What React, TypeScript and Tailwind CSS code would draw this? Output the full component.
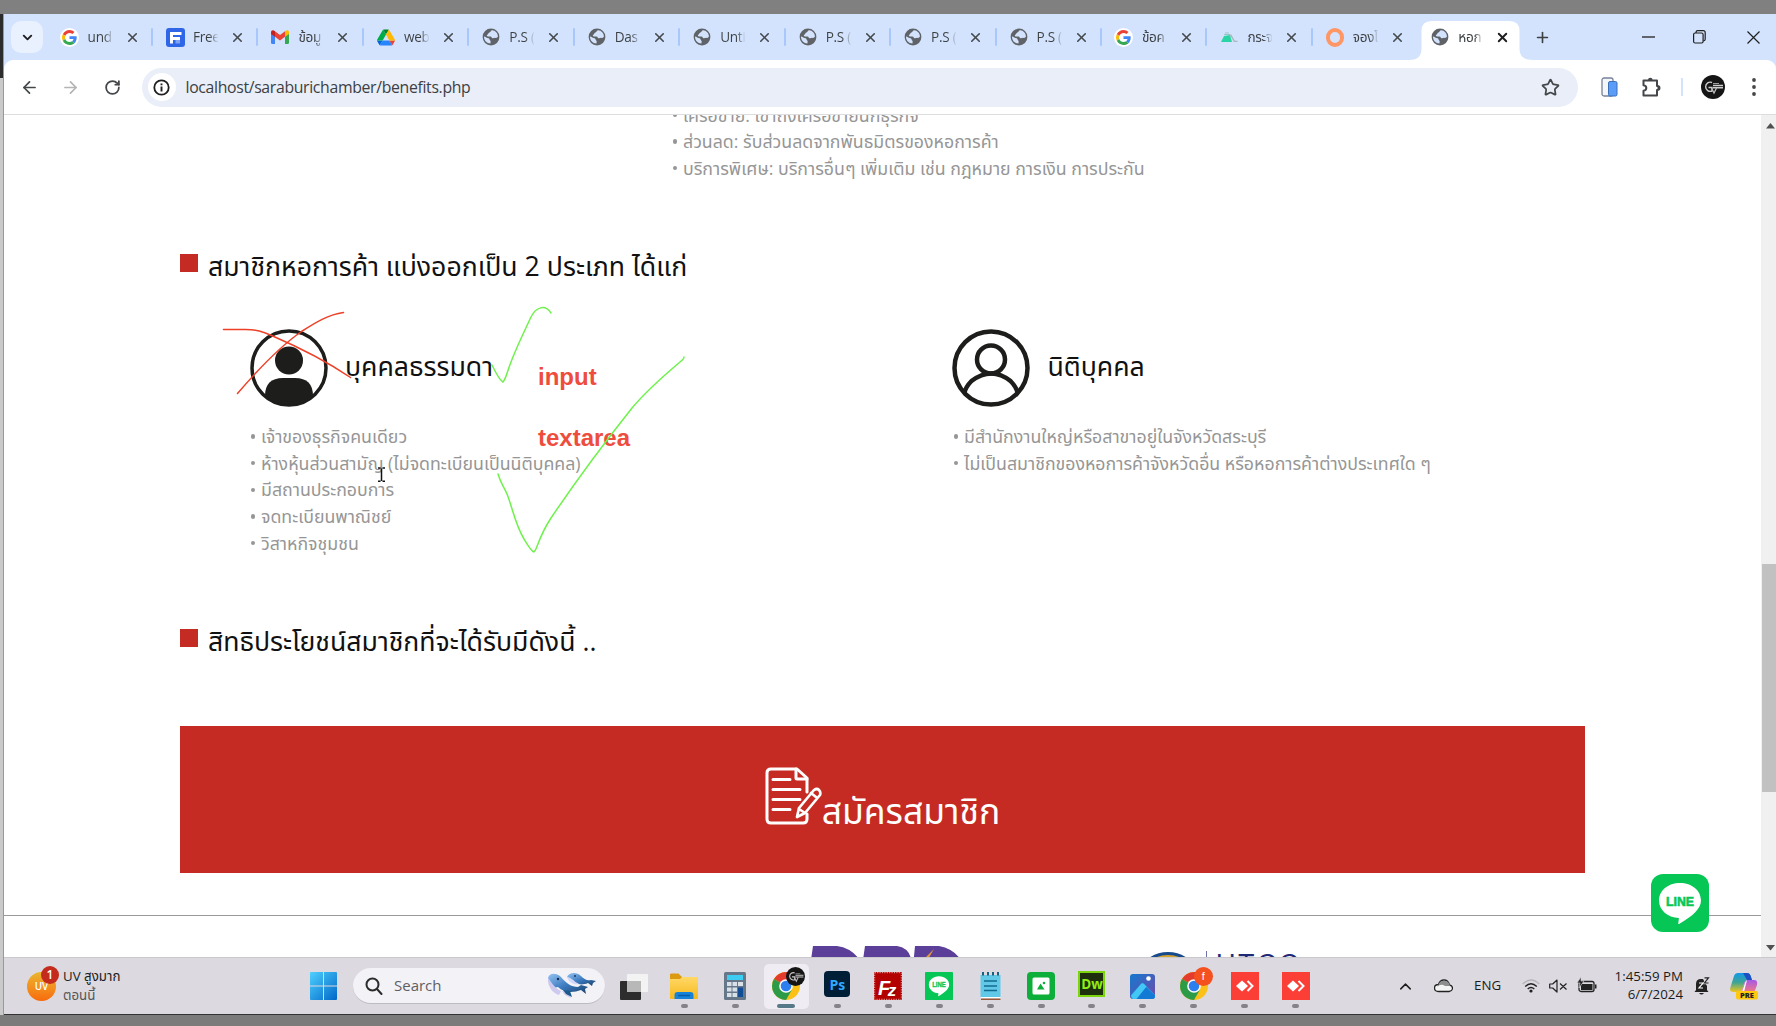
import type { ReactNode } from "react";
import { ArrowLeft, ArrowRight, ChevronDown, ChevronUp, Plus, RotateCw, Star, X } from "lucide-react";

function Google() {
  return (
    <span className="flex h-[19px] w-[19px] items-center justify-center rounded-full bg-white">
      <svg width="15" height="15" viewBox="0 0 48 48">
        <path fill="#EA4335" d="M24 9.5c3.54 0 6.71 1.22 9.21 3.6l6.85-6.85C35.9 2.38 30.47 0 24 0 14.62 0 6.51 5.38 2.56 13.22l7.98 6.19C12.43 13.72 17.74 9.5 24 9.5z" />
        <path fill="#4285F4" d="M46.98 24.55c0-1.57-.15-3.09-.38-4.55H24v9.02h12.94c-.58 2.96-2.26 5.48-4.78 7.18l7.73 6c4.51-4.18 7.09-10.36 7.09-17.65z" />
        <path fill="#FBBC05" d="M10.53 28.59c-.48-1.45-.76-2.99-.76-4.59s.27-3.14.76-4.59l-7.98-6.19C.92 16.46 0 20.12 0 24c0 3.88.92 7.54 2.56 10.78l7.97-6.19z" />
        <path fill="#34A853" d="M24 48c6.48 0 11.93-2.13 15.89-5.81l-7.73-6c-2.15 1.45-4.92 2.3-8.16 2.3-6.26 0-11.57-4.22-13.47-9.91l-7.98 6.19C6.51 42.62 14.62 48 24 48z" />
      </svg>
    </span>
  );
}

function Globe() {
  return (
    <svg width="18" height="18" viewBox="0 0 18 18">
      <circle cx="9" cy="9" r="8.4" fill="#5f6368" />
      <path d="M10.2 2.2c-1.6.1-1.4 1.9-2.8 2.3-1.3.4-.9 1.8-2.1 2.3-.9.4-.4 1.6.8 1.6h2.3c1.3 0 1.1 1.6 2.3 1.8 1 .2 1.600-.5 2.800-.3 1.100.2 1.900-.3 2.500-1.600C15.700 5 13.400 2.400 10.200 2.200z" fill="#d3e3fd" />
      <path d="M2 8.500c1.500.3 3 1.500 4.600 1.800 1.300.3.700 1.700 1.600 2.200.9.500.2 1.700.3 2.900C4.800 15.400 1.900 12.500 2 8.500z" fill="#d3e3fd" />
    </svg>
  );
}

function FreeIcon() {
  return (
    <svg width="19" height="19" viewBox="0 0 19 19">
      <rect width="19" height="19" rx="3" fill="#2f66e8" />
      <path d="M4 15.500V4h11.500v3H7v2h7v3H7v3.500z" fill="#fff" />
      <path d="M9.500 12h4.500v3.500h-4.500z" fill="#7fa2f5" />
    </svg>
  );
}

function Gmail() {
  return (
    <svg width="18" height="14" viewBox="0 0 18 14">
      <path d="M0 2v10.500Q0 14 1.300 14H4V5z" fill="#4285f4" />
      <path d="M18 2v10.500q0 1.500-1.300 1.500H14V5z" fill="#34a853" />
      <path d="M4 1.200 9 5l5-3.800v5.600l-5 3.800-5-3.800z" fill="#ea4335" />
      <path d="M0 2.200C0 .3 2-.5 4 1.200v5.600L0 4z" fill="#c5221f" />
      <path d="M18 2.200C18 .3 16-.5 14 1.200v5.600L18 4z" fill="#fbbc04" />
    </svg>
  );
}

function Drive() {
  return (
    <svg width="18" height="17" viewBox="0 0 87.300 78">
      <path d="m6.600 66.850 3.850 6.650c.8 1.400 1.950 2.500 3.300 3.300l13.750-23.800h-27.500c0 1.550.4 3.100 1.200 4.500z" fill="#0066da" />
      <path d="m43.650 25-13.750-23.800c-1.350.8-2.500 1.900-3.300 3.300l-25.400 44a9.060 9.060 0 0 0 -1.200 4.500h27.500z" fill="#00ac47" />
      <path d="m73.550 76.800c1.350-.8 2.500-1.900 3.300-3.300l1.600-2.750 7.650-13.250c.8-1.400 1.200-2.950 1.200-4.500h-27.500l5.850 11.500z" fill="#ea4335" />
      <path d="m43.650 25 13.750-23.800c-1.350-.8-2.900-1.200-4.500-1.200h-18.500c-1.600 0-3.150.45-4.500 1.200z" fill="#00832d" />
      <path d="m59.800 53h-32.300l-13.750 23.800c1.350.8 2.900 1.200 4.500 1.200h50.800c1.600 0 3.150-.45 4.500-1.200z" fill="#2684fc" />
      <path d="m73.400 26.500-12.700-22c-.8-1.400-1.950-2.500-3.300-3.300l-13.750 23.800 16.150 28h27.450c0-1.550-.4-3.100-1.200-4.500z" fill="#ffba00" />
    </svg>
  );
}

function Hill() {
  return (
    <svg width="17" height="10" viewBox="0 0 17 10">
      <path d="M0 10 3 4l6-1 2 7z" fill="#2bd4a4" />
      <path d="M3 2.500h6M4 1h4" stroke="#9bc4c8" strokeWidth="1" />
      <path d="m9.500 2.500 4 7h3" stroke="#a9b8bb" strokeWidth="1.500" fill="none" />
    </svg>
  );
}

function Ring() {
  return <span className="h-[19px] w-[18px] rounded-full border-[4.5px] border-[#ff9664]" />;
}

const tabs: { icon: ReactNode; label: string }[] = [
  { icon: <Google />, label: "und" },
  { icon: <FreeIcon />, label: "Free" },
  { icon: <Gmail />, label: "ข้อมู" },
  { icon: <Drive />, label: "web" },
  { icon: <Globe />, label: "P.S (" },
  { icon: <Globe />, label: "Das" },
  { icon: <Globe />, label: "Unti" },
  { icon: <Globe />, label: "P.S (" },
  { icon: <Globe />, label: "P.S (" },
  { icon: <Globe />, label: "P.S (" },
  { icon: <Google />, label: "ข้อค" },
  { icon: <Hill />, label: "กระจ" },
  { icon: <Ring />, label: "จองโ" },
  { icon: <Globe />, label: "หอก" },
];

function TabStrip() {
  return (
    <div className="flex h-[46px] shrink-0 bg-[#d3e3fd]">
      <div className="flex w-[43.600px] shrink-0 items-center pl-[7px]">
        <button className="flex h-8 w-8 items-center justify-center rounded-[10px] bg-[#e9f0fe]">
          <ChevronDown size={15} strokeWidth={3} color="#1f1f1f" />
        </button>
      </div>
      {tabs.map((t, i) => {
        const active = i === tabs.length - 1;
        return (
          <div key={i} className="relative flex w-[105.450px] shrink-0 items-center">
            {active && (
              <svg className="absolute bottom-0 left-[-9px]" width="124" height="39" viewBox="0 0 124 39">
                <path d="M0 39c8 0 12.500-3 12.500-12V10q0-10 10-10h78q10 0 10 10v17c0 9 5 12 13.500 12z" fill="#fff" />
              </svg>
            )}
            <span className="relative ml-[12px] flex w-5 justify-center">{t.icon}</span>
            <span className="relative ml-[8px] w-[25px] overflow-hidden whitespace-nowrap bg-gradient-to-r from-[#3c4043] from-65% to-[#3c404310] bg-clip-text text-[13.600px] leading-7 tracking-[-0.300px] text-transparent">
              {t.label}
            </span>
            <X className="relative ml-[12px]" size={15} strokeWidth={active ? 3 : 2.500} color={active ? "#1f1f1f" : "#45494d"} />
            {!active && i < 12 && <span className="ml-auto h-[18px] w-[2px] rounded bg-[#a8c7fa]" />}
          </div>
        );
      })}
      <div className="flex flex-1 items-center pl-[10px]">
        <Plus size={17} strokeWidth={2.300} color="#3c4043" />
        <svg className="ml-[91px]" width="13" height="12"><path d="M0 6h13" stroke="#1f1f1f" strokeWidth="1.300" /></svg>
        <svg className="ml-[38px]" width="13" height="14" fill="none" stroke="#1f1f1f" strokeWidth="1.200">
          <rect x=".6" y="3" width="9.500" height="10" rx="1.500" />
          <path d="M3 3V2.200Q3.200.7 4.700.7h5.500q2 0 2 2v6.500q0 1.500-1.800 1.700" />
        </svg>
        <svg className="ml-[41px]" width="13" height="13"><path d="m.5.5 12 12m0-12-12 12" stroke="#1f1f1f" strokeWidth="1.200" /></svg>
      </div>
    </div>
  );
}

function Avatar({ size }: { size: number }) {
  return (
    <svg width={size} height={size} viewBox="0 0 24 24">
      <circle cx="12" cy="12" r="12" fill="#151515" />
      <path d="M11 7.500A4.600 4.600 0 1 0 11 16v-3.500H7.500M12 10.500h10M12 12.700h10" stroke="#ccc" strokeWidth="1.400" fill="none" />
      <path d="m10.500 13 2.500 5 2.500-5" stroke="#bbb" strokeWidth="1.300" fill="none" />
      <path d="M12 8.500h6" stroke="#999" strokeWidth="1" />
    </svg>
  );
}

function Toolbar() {
  return (
    <div className="h-[55px] shrink-0 bg-[#d3e3fd]">
      <div className="flex h-full items-center rounded-t-[9px] border-b border-[#dcdddf] bg-white">
        <ArrowLeft className="ml-[16px]" size={19} strokeWidth={2.200} color="#44474a" />
        <ArrowRight className="ml-[22px]" size={19} strokeWidth={2.200} color="#b4b5b7" />
        <RotateCw className="ml-[24px]" size={17} strokeWidth={2.500} color="#44474a" />
        <div className="ml-[21px] flex h-[39px] w-[1435.500px] items-center rounded-full bg-[#e9eef8] pl-[5.500px]">
          <span className="flex h-7 w-7 items-center justify-center rounded-full bg-white">
            <svg width="17" height="17" viewBox="0 0 17 17" fill="none" stroke="#1f1f1f">
              <circle cx="8.500" cy="8.500" r="7.200" strokeWidth="1.800" />
              <path d="M8.500 7.600V12.500M8.500 4.500v1.800" strokeWidth="1.900" />
            </svg>
          </span>
          <span className="ml-[10px] mt-[2px] flex-1 whitespace-nowrap font-['Open_Sans','Noto_Sans',sans-serif] text-[15.800px] tracking-[-0.330px] text-[#3c4043]">localhost/saraburichamber/benefits.php</span>
          <Star className="mr-[18px]" size={19} strokeWidth={2.200} color="#44474a" />
        </div>
        <svg className="ml-[23px]" width="17" height="20" viewBox="0 0 17 20">
          <rect x="1" y="1" width="11" height="18" rx="2" fill="#f4f6fa" stroke="#77829a" strokeWidth="1.300" />
          <rect x="7.500" y="4.500" width="8.500" height="14.500" rx="1.500" fill="#5b9cf9" stroke="#3b6fb8" />
        </svg>
        <svg className="ml-[23.500px]" width="21" height="21" viewBox="0 0 21 21">
          <path d="M2.500 3.500H16V9q2.500 0 2.500 2T16 13v5.500H2.500v-4.800q2.800-.4 2.800-2.700T2.500 8.300z" fill="none" stroke="#44474a" strokeWidth="2" strokeLinejoin="round" />
          <path d="M7 3a2.300 2.300 0 0 1 4.600 0zM16.500 8.600a2.300 2.300 0 0 1 0 4.700z" fill="#44474a" />
        </svg>
        <span className="ml-[19px] h-[18px] w-[2px] bg-[#d3e3fd]" />
        <span className="ml-[18px]"><Avatar size={24} /></span>
        <svg className="ml-[27px]" width="4" height="18" fill="#44474a"><circle cx="2" cy="2" r="1.900" /><circle cx="2" cy="9" r="1.900" /><circle cx="2" cy="16" r="1.900" /></svg>
      </div>
    </div>
  );
}

function Bullets({ items }: { items: string[] }) {
  return (
    <ul className="text-[17.740px] text-[#969696]">
      {items.map((t) => (
        <li key={t} className="flex h-[26.700px] items-center whitespace-nowrap">
          <span className="ml-[.5px] mr-[6px] h-[4.500px] w-[4.500px] rounded-full bg-[#969696]" />
          {t}
        </li>
      ))}
    </ul>
  );
}

function Heading({ children }: { children: ReactNode }) {
  return (
    <h2 className="flex h-[34px] items-center text-[26.650px] text-[#111]">
      <span className="mb-[6px] mr-[10.500px] h-[18px] w-[17.500px] bg-[#c42b22]" />
      <span className="mt-[2px] whitespace-nowrap">{children}</span>
    </h2>
  );
}

function LineLogo({ size, radius }: { size: number; radius: number }) {
  return (
    <svg width={size} height={size} viewBox="0 0 58 58">
      <rect width="58" height="58" rx={radius} fill="#06c755" />
      <path d="M29 9c12 0 21 7.600 21 17.500 0 8-8 15.500-22 23.500-.8.300-.9-.3-.6-1.500l.5-4.500C16.500 43.500 8 36 8 26.500 8 16.600 17 9 29 9z" fill="#fff" />
      <text x="29" y="31.500" textAnchor="middle" fontFamily="Liberation Sans" fontWeight="700" fontSize="13" textLength="28" lengthAdjust="spacingAndGlyphs" fill="#06c755" stroke="#06c755" strokeWidth=".6">LINE</text>
    </svg>
  );
}

function Annotations() {
  return (
    <div className="pointer-events-none absolute inset-0">
      <div className="absolute left-[534px] top-[230.500px] font-['Liberation_Sans',Arial,sans-serif] text-[24px] font-bold leading-[61.200px] text-[#ee4d3d]">
        <div>input</div>
        <div>textarea</div>
      </div>
      <svg className="absolute left-0 top-0" width="1756" height="842" viewBox="4 115 1756 842" fill="none" strokeLinecap="round" strokeWidth="1.500">
        <g stroke="#ee4027">
          <path d="M223.500 329.500h22c11 0 17 2 26 6 28 12 51 23 79 42" />
          <path d="M237.500 393.500c18-21 41-46 64-62 14-9 27-17 42-19" />
        </g>
        <g stroke="#6ef24b">
          <path d="M492 365c3 6 7 15 11 17 3-3 4-10 8-20 6-16 13-30 20-45 5-10 14-13 20-4" />
          <path d="M498 474c3 10 6 13 9 20 5 12 8 30 17 45 3 5 7 12 10 13 3-2 4-14 17-34 25-37 54-76 81-110 17-20 35-35 48-46q4-3 4-5" />
        </g>
        <g stroke="#111" strokeLinecap="butt">
          <path d="M378 468h2.500M382.500 468h2.500M381.500 468.500v12.500M378 481.300h2.500M382.500 481.300h2.500" />
        </g>
      </svg>
    </div>
  );
}

function PageContent() {
  return (
    <div className="relative flex-1 overflow-hidden bg-white">
      <div className="-mt-[13.500px] pl-[668px]">
        <Bullets items={["เครือข่าย: เข้าถึงเครือข่ายนักธุรกิจ", "ส่วนลด: รับส่วนลดจากพันธมิตรของหอการค้า", "บริการพิเศษ: บริการอื่นๆ เพิ่มเติม เช่น กฎหมาย การเงิน การประกัน"]} />
      </div>
      <div className="ml-[176px] mt-[67.500px] w-[1405px]">
        <Heading>สมาชิกหอการค้า แบ่งออกเป็น 2 ประเภท ได้แก่</Heading>
        <div className="mt-[46px] grid grid-cols-2 pl-[70px]">
          <div>
            <div className="flex h-[78px] items-center gap-[17px] text-[26.650px] text-[#111]">
              <svg width="78" height="78" viewBox="0 0 78 78" fill="#1d1d1b">
                <defs><clipPath id="disc"><circle cx="39" cy="39" r="37" /></clipPath></defs>
                <circle cx="39" cy="39" r="37" fill="none" stroke="#1d1d1b" strokeWidth="3.500" />
                <circle cx="39" cy="31.500" r="14" />
                <path clipPath="url(#disc)" d="M15 78V67q0-18 18-18h12q18 0 18 18v11z" />
              </svg>
              <span className="-mt-[2px]">บุคคลธรรมดา</span>
            </div>
            <div className="mt-[16px]">
              <Bullets items={["เจ้าของธุรกิจคนเดียว", "ห้างหุ้นส่วนสามัญ (ไม่จดทะเบียนเป็นนิติบุคคล)", "มีสถานประกอบการ", "จดทะเบียนพาณิชย์", "วิสาหกิจชุมชน"]} />
            </div>
          </div>
          <div className="pl-[35px]">
            <div className="flex h-[78px] items-center gap-[17.500px] text-[26.650px] text-[#111]">
              <svg className="-ml-[.5px]" width="78" height="78" viewBox="0 0 78 78" fill="none" stroke="#1d1d1b" strokeWidth="4.500">
                <circle cx="39" cy="39" r="36.500" />
                <circle cx="39" cy="30.500" r="14" />
                <path d="M12.500 64q1-6 7-12 20-15 39 0 6 6 7 12" />
              </svg>
              <span className="-mt-[2px]">นิติบุคคล</span>
            </div>
            <div className="mt-[16px] pl-[.5px]">
              <Bullets items={["มีสำนักงานใหญ่หรือสาขาอยู่ในจังหวัดสระบุรี", "ไม่เป็นสมาชิกของหอการค้าจังหวัดอื่น หรือหอการค้าต่างประเทศใด ๆ"]} />
            </div>
          </div>
        </div>
        <div className="mt-[67px]">
          <Heading>สิทธิประโยชน์สมาชิกที่จะได้รับมีดังนี้ ..</Heading>
        </div>
        <div className="mt-[68px] flex h-[147px] items-center justify-center bg-[#c52b22] text-white">
          <svg className="mb-[7px]" width="57" height="58" viewBox="0 0 57 58" fill="none" stroke="#fff" strokeWidth="3" strokeLinecap="round" strokeLinejoin="round">
            <path d="M42 25V11L32 2H6Q2 2 2 6v46q0 4 4 4h32q4 0 4-4v-5" />
            <path d="M31 2v9q0 1 1 1h10M8 12.500h17M8 22.500h27M8 32.500h27M8 42.500h17" />
            <path d="m32 50 2-9 15-18q3-2 5 0t1 5L40 46zM46 26l5 4M34 42l6 4" strokeWidth="2.700" />
          </svg>
          <span className="mt-[22px] text-[35.500px] leading-[48px]">สมัครสมาชิก</span>
        </div>
      </div>
      <hr className="mt-[42px] border-t border-[#9a9a9a]" />
      <div className="flex items-start">
        <svg className="ml-[806px] mt-[29px]" width="152" height="60" viewBox="0 0 152 60">
          <path d="M3 1h24q14 2 22 13l2 8H0zM55 1h32q12 2 14 13v8H52zM105 1h24q16 3 23 16v5h-49z" fill="#5b3f99" />
          <path d="m112 16 12-12-7 12z" fill="#e4983a" />
        </svg>
        <svg className="ml-[172px] mt-[35px]" width="68" height="68" viewBox="0 0 68 68">
          <circle cx="34" cy="34" r="31.500" fill="#d7a42c" stroke="#174b8c" strokeWidth="3" />
        </svg>
        <div className="ml-[4px] mt-[28px] flex whitespace-nowrap font-['Liberation_Sans',sans-serif] text-[27px] leading-[40px] text-[#1e2a78]">
          <span className="mr-[9px] mt-[7px] h-7 w-px bg-[#6b73a8]" />
          <span className="tracking-[2.500px]">UTCC</span>
        </div>
      </div>
      <div className="absolute left-[1646.500px] top-[759px]"><LineLogo size={58} radius={12} /></div>
      <Annotations />
    </div>
  );
}

function ScrollBar() {
  return (
    <div className="flex w-[15px] shrink-0 flex-col items-center bg-[#f0f0f0]">
      <svg className="ml-[4px] mt-[8px]" width="9" height="6"><path d="m4.500 0 4.500 5.500H0z" fill="#505050" /></svg>
      <div className="ml-[1px] mt-[435px] h-[228px] w-[14px] bg-[#c1c1c1]" />
      <svg className="ml-[4px] mt-[153px]" width="9" height="6"><path d="M4.500 5.500 0 0h9z" fill="#505050" /></svg>
    </div>
  );
}

function Chrome({ badge }: { badge: ReactNode }) {
  return (
    <span className="relative">
      <svg width="28" height="28" viewBox="0 0 28 28">
        <circle cx="14" cy="14" r="14" fill="#fbc116" />
        <path d="M14 14 1.900 7A14 14 0 0 1 26.100 7z" fill="#e33b2e" />
        <path d="M1.900 7A14 14 0 0 0 14 28l6-10.500L14 14z" fill="#2c9b48" />
        <path d="M14 7.500H26.300" stroke="#e33b2e" strokeWidth="2" />
        <circle cx="14" cy="14" r="6.800" fill="#fff" />
        <circle cx="14" cy="14" r="5.300" fill="#2d7ff0" />
      </svg>
      <span className="absolute -right-[5px] -top-[5px]">{badge}</span>
    </span>
  );
}

function AnyDesk() {
  return (
    <svg width="28" height="28" viewBox="0 0 28 28">
      <rect width="28" height="28" fill="#fb3f37" />
      <path d="m5 14 6-5.500 6 5.500-6 5.500z" fill="#fff" />
      <path d="m15.500 9 5.500 5-5.500 5" stroke="#fb3f37" strokeWidth="3.500" fill="none" />
      <path d="m16.500 9 5 5-5 5" stroke="#fff" strokeWidth="2" fill="none" />
    </svg>
  );
}

const apps: { icon: ReactNode; active?: boolean }[] = [
  {
    icon: (
      <svg width="28" height="26" viewBox="0 0 28 26">
        <defs><linearGradient id="fold" x2="0" y2="1"><stop stopColor="#ffd866" /><stop offset="1" stopColor="#f7b91f" /></linearGradient></defs>
        <path d="M0 1.500Q0 .5 1.500.5h7L12 4h14q2 0 2 2v3H0z" fill="#dc9a10" />
        <path d="M0 6h10l2-2h15q1 0 1 1v20q0 1-1 1H1q-1 0-1-1z" fill="url(#fold)" />
        <path d="M4.500 26v-4q0-3 3-3h13q3 0 3 3v4z" fill="#1683d8" />
        <path d="M8 22.500h12" stroke="#0a5ba5" strokeWidth="1.500" />
      </svg>
    ),
  },
  {
    icon: (
      <svg width="22" height="28" viewBox="0 0 22 28">
        <rect width="22" height="28" rx="1.500" fill="#66778a" />
        <rect x="3" y="3" width="16" height="5" fill="#3ecdf2" />
        <path d="M3 10h4.500v4H3zM8.500 10H13v4H8.500zM14 10h5v4h-5zM3 15.500h4.500v4H3zM8.500 15.500H13v4H8.500zM3 21h4.500v4H3zM8.500 21H13v4H8.500z" fill="#d8e0e8" />
        <path d="M14 15.500h5V25h-5z" fill="#114d95" />
      </svg>
    ),
  },
  { active: true, icon: <Chrome badge={<Avatar size={19} />} /> },
  {
    icon: (
      <span className="mb-1 flex h-[26px] w-[26px] items-center justify-center rounded-[4px] bg-[#001e36] font-['Open_Sans',sans-serif] text-[14px] font-bold text-[#31a8ff]">Ps</span>
    ),
  },
  {
    icon: (
      <svg width="28" height="28" viewBox="0 0 28 28">
        <rect width="28" height="28" fill="#b30000" />
        <rect x=".7" y=".7" width="26.600" height="26.600" fill="none" stroke="#e8b4b4" strokeWidth="1" strokeDasharray="1.200 1.200" />
        <path d="M15 17h9l-6 8" fill="#8c0000" />
        <text x="4" y="23" fontFamily="Liberation Sans" fontStyle="italic" fontWeight="700" fontSize="20" fill="#fff">F<tspan dx="-2.500" dy="1" fontSize="17">z</tspan></text>
      </svg>
    ),
  },
  { icon: <LineLogo size={28} radius={1} /> },
  {
    icon: (
      <svg width="21" height="28" viewBox="0 0 21 28">
        <path d="M.5 3h20v22H.5z" fill="#62c8e8" />
        <path d="M1 25h19.500v1.500H1z" fill="#fff" /><path d="M1 26.500h19.500V28H1z" fill="#99583a" />
        <path d="M3 0v3.500M8 0v3.500M13 0v3.500M18 0v3.500" stroke="#18607f" strokeWidth="2" />
        <path d="M4 9h13M4 14h13M4 18.500h13" stroke="#12698f" strokeWidth="1.700" />
      </svg>
    ),
  },
  {
    icon: (
      <svg width="28" height="28" viewBox="0 0 28 28">
        <rect width="28" height="28" rx="4" fill="#0eae3b" />
        <rect x="5.500" y="5.500" width="17" height="17" rx="1.500" fill="#fff" />
        <path d="m10 17.500 3.500-6 4 6z" fill="#0eae3b" /><circle cx="17" cy="11" r="1.300" fill="#0eae3b" />
      </svg>
    ),
  },
  {
    icon: (
      <span className="mb-1 flex h-[26px] w-[27px] items-center justify-center border-2 border-[#7bd40c] bg-[#1d2f0c] font-['Open_Sans',sans-serif] text-[13.500px] font-bold text-[#8fee14]">Dw</span>
    ),
  },
  {
    icon: (
      <svg width="25" height="25" viewBox="0 0 25 25">
        <defs><linearGradient id="ph" x2="1" y2="1"><stop stopColor="#1479d0" /><stop offset="1" stopColor="#7049a8" /></linearGradient></defs>
        <rect width="25" height="25" rx="3" fill="url(#ph)" />
        <path d="M1 21 11 10q1.500-1.500 3 0l11 11v1q0 3-3 3H3q-2-1-2-4z" fill="#27a7ee" />
        <path d="m7 25 9-12 9 8.500q0 3.500-3 3.500z" fill="#1279d5" />
        <path d="M1 22 11 10q1.500-1.500 3 0l2.500 2.500L6 25H3z" fill="#43c8f5" />
        <circle cx="18.500" cy="4.500" r="2.300" fill="#fff" />
      </svg>
    ),
  },
  {
    icon: (
      <Chrome badge={<span className="flex h-[19px] w-[19px] items-center justify-center rounded-full bg-[#f4511e] font-['Liberation_Sans',sans-serif] text-[11px] text-white">f</span>} />
    ),
  },
  { icon: <AnyDesk /> },
  { icon: <AnyDesk /> },
];

function Whales() {
  return (
    <svg width="48" height="26" viewBox="0 0 48 26">
      <defs><linearGradient id="wh" x2="1" y2="1"><stop stopColor="#93c3f2" /><stop offset=".5" stopColor="#3c7bc0" /><stop offset="1" stopColor="#174067" /></linearGradient></defs>
      <path d="M0 5C1 0 8-1 13 4c5 6 10 10 17 10l3-2 7 2-3 2 1 5-5-4c-8 3-17 3-23-3C5 16 1 11 0 5z" fill="url(#wh)" />
      <path d="M0 5c3 3 6 10 13 13l-2 4C4 20-1 12 0 5zM14 18l7 1 2 6-6-3z" fill="#cdc9ef" />
      <path d="M15 17l7 1 2 6-6-3z" fill="#1c5a8e" />
      <path d="M19 4c2-5 10-5 14-1 3 3 6 5 10 4l5 1-3 2-1 3-4-3c-7 3-13 1-15-3z" fill="url(#wh)" />
      <path d="M19 4c4 0 6 4 12 7-5 1-10-1-12-7z" fill="#d4d8f8" />
      <circle cx="10" cy="6" r="1.200" fill="#162a55" /><circle cx="27" cy="3" r=".9" fill="#162a55" />
    </svg>
  );
}

function Taskbar() {
  return (
    <div className="flex h-[58px] shrink-0 items-center border-b border-t border-b-[#333] border-t-[#c9c8cb] bg-[#dcd9e0] text-[#1b1b1b]">
      <div className="relative ml-[23px] flex h-[29px] w-[29px] shrink-0 items-center justify-center rounded-full bg-gradient-to-b from-[#e9b52e] to-[#f76a0c] font-['Open_Sans',sans-serif] text-[10px] font-semibold text-white">
        UV
        <span className="absolute -right-[3px] -top-[6px] flex h-[18px] w-[18px] items-center justify-center rounded-full bg-[#c42b1c] text-[12px]">1</span>
      </div>
      <div className="ml-[7px] w-[247px] shrink-0 text-[13.300px] leading-[19px]">
        <div>UV สูงมาก</div>
        <div className="text-[#555]">ตอนนี้</div>
      </div>
      <svg className="shrink-0" width="27" height="28" viewBox="0 0 27 28">
        <defs><linearGradient id="win" x2="1" y2="1"><stop stopColor="#4fd0ff" /><stop offset="1" stopColor="#0067c8" /></linearGradient></defs>
        <path d="M0 1q0-1 1-1h12v13.500H0zM14 0h12q1 0 1 1v12.500H14zM0 14.500h13V28H1q-1 0-1-1zM14 14.500h13V27q0 1-1 1H14z" fill="url(#win)" />
      </svg>
      <div className="ml-[16px] flex h-[36px] w-[252px] shrink-0 items-center rounded-full border-b border-[#bdbbc2] bg-[#f3f2f7] pl-[12px] pr-[9px]">
        <svg width="18" height="18" viewBox="0 0 18 18" fill="none" stroke="#2b2b2b" strokeWidth="2" strokeLinecap="round"><circle cx="7.500" cy="7.500" r="6" /><path d="m12 12 4.500 5" /></svg>
        <span className="ml-[11px] flex-1 font-['Open_Sans',sans-serif] text-[15px] text-[#5f5f63]">Search</span>
        <Whales />
      </div>
      <svg className="ml-[15px] shrink-0" width="28" height="27" viewBox="0 0 28 27">
        <rect y="8" width="21" height="19" rx="1" fill="#2d2d2d" />
        <rect x="7" y="1" width="21" height="18" rx="1" fill="#f4f3f4" />
        <path d="M7 8h14v11H7z" fill="#b9b8b9" />
      </svg>
      <div className="ml-[11px] flex shrink-0">
        {apps.map((a, i) => (
          <div key={i} className="flex w-[50.950px] justify-center">
            <div className={a.active ? "relative flex h-[45px] w-[45px] items-center justify-center rounded-[5px] bg-[#efedf3]" : "relative flex h-[45px] w-[45px] items-center justify-center"}>
              {a.icon}
              <span className={a.active ? "absolute bottom-[1px] h-[4px] w-[18px] rounded-full bg-[#56798a]" : "absolute bottom-[1px] h-[4px] w-[7px] rounded-full bg-[#858389]"} />
            </div>
          </div>
        ))}
      </div>
      <div className="ml-auto flex items-center pr-[18px]">
        <ChevronUp size={19} strokeWidth={1.800} />
        <svg className="ml-[19px]" width="19" height="14" viewBox="0 0 19 14">
          <path d="M4.500 12.500q-4 0-4-3.500T4.500 5.500Q6 1 10 1t5.500 5q3 .5 3 3.200t-3.500 3.300z" fill="#f4f4f4" stroke="#222" strokeWidth="1.300" />
          <path d="M3 8q4-4 8-1l5 0Q15 1.500 10 1.700T4.500 6z" fill="#8e8e8e" />
        </svg>
        <span className="ml-[21px] w-[27px] font-['Open_Sans',sans-serif] text-[13.300px]">ENG</span>
        <svg className="ml-[21px]" width="18" height="14" viewBox="0 0 18 14" fill="none" strokeWidth="1.400">
          <path d="M.7 5q8.300-8 16.600 0" stroke="#b5b3b8" /><path d="M3.200 7.500q5.800-5.500 11.600 0M5.700 10q3.300-3 6.600 0" stroke="#222" /><circle cx="9" cy="12" r="1.600" fill="#222" />
        </svg>
        <svg className="ml-[9px]" width="19" height="14" viewBox="0 0 19 14" fill="none" stroke="#222" strokeWidth="1.200">
          <path d="M.7 5v4h3L8 13V1L3.700 5zM11 4.500l6.500 6m0-6-6.500 6" strokeLinejoin="round" />
        </svg>
        <svg className="mb-[2px] ml-[9px]" width="20" height="16" viewBox="0 0 20 16">
          <rect x="2" y="4.500" width="15" height="10" rx="2" fill="none" stroke="#222" strokeWidth="1.300" /><path d="M4 7h11.500v6H4z" fill="#222" /><path d="M18 7.500h1.500v4H18z" fill="#222" />
          <path d="M4 0 0 6h3l-1 5 5-7H4z" fill="#222" stroke="#dcd9e0" strokeWidth=".6" />
        </svg>
        <div className="-mt-[2px] ml-[6px] w-[80px] whitespace-nowrap text-right font-['Open_Sans',sans-serif] text-[13.300px] leading-[18.500px]">
          <div>1:45:59 PM</div>
          <div>6/7/2024</div>
        </div>
        <svg className="ml-[11px]" width="16" height="18" viewBox="0 0 16 18">
          <path d="M2 13V7q0-5 5-5h2l4 7v4l1.500 2H.5zM5 16h5q-2.500 3-5 0z" fill="#222" />
          <path d="M10.500.8h4L10.500 6h4" stroke="#dcd9e0" strokeWidth="2.600" fill="none" />
          <path d="M5 6h4l-4 5h4" stroke="#fff" strokeWidth="1.200" fill="none" /><path d="M10.500.8h4L10.500 6h4" stroke="#222" strokeWidth="1.200" fill="none" />
        </svg>
        <svg className="ml-[20px]" width="28" height="27" viewBox="0 0 28 27">
          <defs>
            <linearGradient id="cp1" x2="0" y2="1"><stop stopColor="#1398e8" /><stop offset=".5" stopColor="#3ea594" /><stop offset="1" stopColor="#f3c51c" /></linearGradient>
            <linearGradient id="cp2" x2="0" y2="1"><stop stopColor="#a558e8" /><stop offset="1" stopColor="#fa7c7c" /></linearGradient>
          </defs>
          <path d="M8 0h9q3 0 4 4l1 3h-4q-3 0-4 4l-2 6q-1 2-4 2H3q-4 0-2.500-5L4 3q1-3 4-3z" fill="url(#cp1)" />
          <path d="M13 0h4q3 0 4 4l1 3h-5z" fill="#1d4fc4" />
          <path d="M17 7h7q4 0 3 5l-3 8H11l3-9q1-4 3-4z" fill="url(#cp2)" />
          <path d="m12 19 3-9q.5-2 2-3l-1 4-2 8z" fill="#fff" />
          <rect x="6" y="18" width="22" height="8.500" rx="2" fill="#ffc90e" />
          <text x="17" y="25" textAnchor="middle" fontFamily="Open Sans" fontWeight="800" fontSize="7.500" fill="#222">PRE</text>
        </svg>
      </div>
    </div>
  );
}

export default function App() {
  return (
    <div className="flex h-[1026px] w-[1776px] flex-col overflow-hidden bg-[#808080] font-['Open_Sans','Noto_Sans','Noto_Sans_Thai',sans-serif]">
      <div className="h-[14px] shrink-0" />
      <div className="flex h-[1001px] shrink-0">
        <div className="flex w-[4px] shrink-0 flex-col border-r border-[#999]">
          <div className="h-[64px] bg-[#2c2c2c]" />
          <div className="flex-1 bg-[#cacaca]" />
        </div>
        <div className="flex min-w-0 flex-1 flex-col">
          <TabStrip />
          <Toolbar />
          <div className="flex min-h-0 flex-1">
            <PageContent />
            <ScrollBar />
          </div>
          <Taskbar />
        </div>
      </div>
      <div className="flex-1 bg-[#7b7b7b]" />
    </div>
  );
}
